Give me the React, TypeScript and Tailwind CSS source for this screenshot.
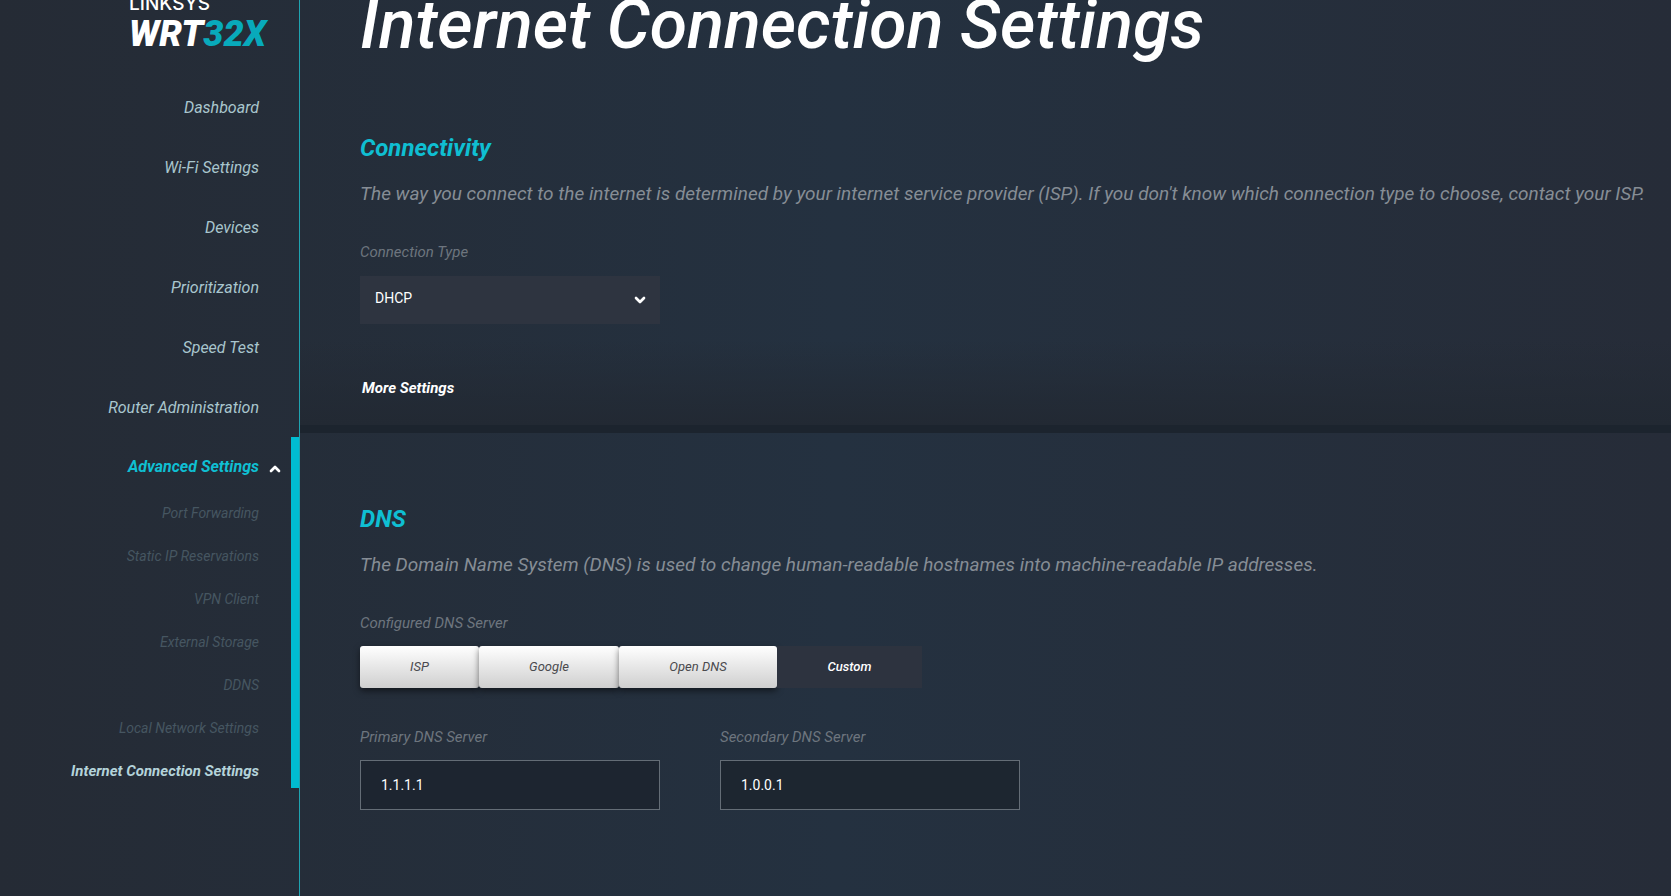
import React, { useState } from 'react';
import { ChevronDown, ChevronUp } from 'lucide-react';

const navItems = ['Dashboard', 'Wi-Fi Settings', 'Devices', 'Prioritization', 'Speed Test', 'Router Administration'];

const advancedItems = [
  'Port Forwarding',
  'Static IP Reservations',
  'VPN Client',
  'External Storage',
  'DDNS',
  'Local Network Settings',
  'Internet Connection Settings'
];

const dnsServers = [
  { name: 'ISP', width: 'w-[119px]' },
  { name: 'Google', width: 'w-[140px]' },
  { name: 'Open DNS', width: 'w-[158px]' },
  { name: 'Custom', width: 'w-[145px]' }
];

const Sidebar = () => (
  <aside className="w-[300px] shrink-0 border-r border-[#1fa3b0] text-right italic">
    {/* Logo */}
    <a href="#" className="flex h-[77px] flex-col items-start pl-[129px] text-left">
      <span className="-mt-[5px] font-['Inter',sans-serif] text-[19px] leading-[18px] font-medium not-italic text-white">
        LINKSYS
      </span>
      <span className="text-[36px] leading-[42px] font-black whitespace-nowrap text-white">
        WRT<span className="text-[#08aabb]">32X</span>
      </span>
    </a>

    <nav>
      <ul>
        {navItems.map((item) => (
          <li key={item} className="flex h-[60px] items-center justify-end pt-0.5 pr-10">
            <a href="#" className="text-base leading-5 text-[#a9c6ce]">{item}</a>
          </li>
        ))}
        <li className="border-r-8 border-[#00bcd1]">
          <button
            type="button"
            aria-expanded="true"
            className="flex h-[60px] w-full items-center justify-end gap-2 pr-2 text-base leading-5 font-bold text-[#0fbfd2] italic"
          >
            Advanced Settings
            <ChevronUp size={16} strokeWidth={4} className="mt-1 text-white" />
          </button>
          <ul className="flex flex-col gap-[23px] pt-[6px] pr-8 pb-[7px] leading-5">
            {advancedItems.map((item) => (
              <li key={item}>
                <a
                  href="#"
                  className={
                    item === 'Internet Connection Settings'
                      ? 'text-[15px] font-bold text-[#b4d3da]'
                      : 'text-sm leading-5 text-[#465661]'
                  }
                >
                  {item}
                </a>
              </li>
            ))}
          </ul>
        </li>
      </ul>
    </nav>
  </aside>
);

const App = () => {
  const [server, setServer] = useState('Custom');

  return (
    <div className="flex min-h-screen overflow-hidden bg-linear-to-r from-[#252b35] via-[#243140] to-[#262c38] font-['Roboto',sans-serif]">
      <Sidebar />

      <main className="min-w-0 flex-1">
        {/* Connectivity */}
        <section className="flow-root border-b-8 border-[#1c242e] bg-linear-to-t from-[#222933] to-transparent to-20% pb-[25px] pl-[60px]">
          <h1 className="-mt-[17px] text-[68px] leading-[84px] font-medium whitespace-nowrap text-white italic">
            Internet Connection Settings
          </h1>
          <h2 className="mt-[65px] text-2xl font-bold text-[#0fbfd2] italic">Connectivity</h2>
          <p className="mt-4 text-[19px] leading-7 text-[#868d95] italic">
            The way you connect to the internet is determined by your internet service provider (ISP). If you don't know which connection type to choose, contact your ISP.
          </p>
          <label htmlFor="connection-type" className="mt-8 block text-[15px] leading-6 text-[#6d757e] italic">
            Connection Type
          </label>
          <div className="relative mt-3 w-[300px]">
            <select
              id="connection-type"
              className="h-12 w-full appearance-none bg-[#2e3440] px-[15px] pb-1 text-sm text-white outline-none"
            >
              <option>DHCP</option>
            </select>
            <ChevronDown size={16} strokeWidth={4} className="pointer-events-none absolute top-4 right-3 text-white" />
          </div>
          <button type="button" className="mt-[52px] block pl-0.5 text-[15px] leading-6 font-bold text-white italic">
            More Settings
          </button>
        </section>

        {/* DNS */}
        <section className="pt-[70px] pb-12 pl-[60px]">
          <h2 className="text-2xl font-bold text-[#0fbfd2] italic">DNS</h2>
          <p className="mt-4 text-[19px] leading-7 text-[#868d95] italic">
            The Domain Name System (DNS) is used to change human-readable hostnames into machine-readable IP addresses.
          </p>
          <p id="dns-label" className="mt-8 text-[15px] leading-6 text-[#6d757e] italic">
            Configured DNS Server
          </p>
          <div role="group" aria-labelledby="dns-label" className="mt-[11px] flex">
            {dnsServers.map(({ name, width }) => (
              <button
                key={name}
                type="button"
                aria-pressed={server === name}
                onClick={() => setServer(name)}
                className={`h-[42px] text-[13px] italic ${width} ${
                  server === name
                    ? 'bg-[#2d333f] font-medium text-white'
                    : 'rounded-[3px] bg-linear-to-b from-white to-[#cfcfcf] text-[#4a4a4e] shadow-[0_3px_6px_rgba(0,0,0,0.5)]'
                }`}
              >
                {name}
              </button>
            ))}
          </div>
          <div className="mt-[37px] flex gap-[60px]">
            <div className="w-[300px]">
              <label htmlFor="primary-dns" className="block text-[15px] leading-6 text-[#6d757e] italic">
                Primary DNS Server
              </label>
              <input
                id="primary-dns"
                type="text"
                defaultValue="1.1.1.1"
                className="mt-[11px] h-[50px] w-full border border-[#646d76] bg-[#1d2530] px-5 text-sm text-white outline-none"
              />
            </div>
            <div className="w-[300px]">
              <label htmlFor="secondary-dns" className="block text-[15px] leading-6 text-[#6d757e] italic">
                Secondary DNS Server
              </label>
              <input
                id="secondary-dns"
                type="text"
                defaultValue="1.0.0.1"
                className="mt-[11px] h-[50px] w-full border border-[#646d76] bg-[#1d2630] px-5 text-sm text-white outline-none"
              />
            </div>
          </div>
        </section>
      </main>
    </div>
  );
};

export default App;
